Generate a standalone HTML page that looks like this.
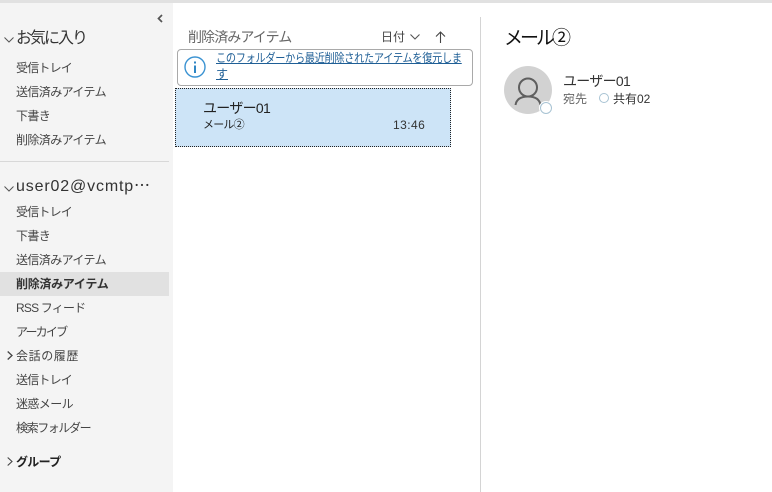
<!DOCTYPE html>
<html lang="ja"><head><meta charset="utf-8"><style>
html,body{margin:0;padding:0;width:772px;height:492px;overflow:hidden;background:#fff}
body{position:relative;font-family:"Liberation Sans","Noto Sans CJK JP",sans-serif;color:#333}
.t{position:absolute;white-space:nowrap;line-height:20px}
.n{left:16px;font-size:12px;color:#444;letter-spacing:-.6px}
.b{position:absolute}
svg{position:absolute;overflow:visible}
</style></head><body>
<div class="b" style="left:0;top:0;width:772px;height:3px;background:#e1e1e1"></div>
<div class="b" style="left:0;top:3px;width:173px;height:489px;background:#f4f4f4"></div>
<svg style="left:156px;top:14px" width="8" height="9"><path d="M6 1L2.500 4.500L6 8" fill="none" stroke="#555" stroke-width="1.700"/></svg>
<svg style="left:4px;top:37px" width="10" height="6"><path d="M.5 .5L5 5L9.500 .5" fill="none" stroke="#555" stroke-width="1"/></svg>
<div class="t" style="left:16px;top:29px;font-size:16px;color:#333;letter-spacing:-2px">お気に入り</div>
<div class="t n" style="top:58px;letter-spacing:-.8px">受信トレイ</div>
<div class="t n" style="top:82px">送信済みアイテム</div>
<div class="t n" style="top:106px">下書き</div>
<div class="t n" style="top:130px">削除済みアイテム</div>
<div class="b" style="left:0;top:161px;width:169px;height:1px;background:#d8d8d8"></div>
<svg style="left:4px;top:186px" width="10" height="6"><path d="M.5 .5L5 5L9.500 .5" fill="none" stroke="#555" stroke-width="1"/></svg>
<div class="t" style="left:16px;top:177px;font-size:16px;color:#333;letter-spacing:.85px">user02@vcmtp⋯</div>
<div class="t n" style="top:202px;letter-spacing:-.8px">受信トレイ</div>
<div class="t n" style="top:226px">下書き</div>
<div class="t n" style="top:250px">送信済みアイテム</div>
<div class="b" style="left:0;top:272px;width:169px;height:24px;background:#e1e1e1"></div>
<div class="t n" style="top:274px;font-weight:700;color:#333;letter-spacing:-.3px">削除済みアイテム</div>
<div class="t n" style="top:298px;letter-spacing:-.8px">RSS フィード</div>
<div class="t n" style="top:322px;letter-spacing:-1.800px">アーカイブ</div>
<svg style="left:7px;top:351px" width="6" height="9"><path d="M.7 .5L5 4.500L.7 8.500" fill="none" stroke="#444" stroke-width="1.300"/></svg>
<div class="t n" style="top:346px;letter-spacing:.6px">会話の履歴</div>
<div class="t n" style="top:370px;letter-spacing:-.8px">送信トレイ</div>
<div class="t n" style="top:394px;letter-spacing:-.6px">迷惑メール</div>
<div class="t n" style="top:418px;letter-spacing:-1.400px">検索フォルダー</div>
<svg style="left:7px;top:457px" width="6" height="9"><path d="M.7 .5L5 4.500L.7 8.500" fill="none" stroke="#444" stroke-width="1.100"/></svg>
<div class="t n" style="top:452px;font-weight:700;color:#222;letter-spacing:-.7px">グループ</div>

<div class="t" style="left:188px;top:27px;font-size:14px;color:#666;letter-spacing:-.9px">削除済みアイテム</div>
<div class="t" style="left:381px;top:27px;font-size:12px;color:#444">日付</div>
<svg style="left:410px;top:34px" width="10" height="6"><path d="M.5 .5L5 5L9.500 .5" fill="none" stroke="#555" stroke-width="1.100"/></svg>
<svg style="left:435px;top:31px" width="11" height="12"><path d="M5.500 12V1M1 5.500L5.500 1L10 5.500" fill="none" stroke="#444" stroke-width="1.100"/></svg>

<div class="b" style="left:177px;top:49px;width:294px;height:35px;border:1px solid #a9a9a9;border-radius:4px;background:#fff"></div>
<svg style="left:184px;top:56px" width="22" height="22"><circle cx="11" cy="11" r="10" fill="none" stroke="#3b93d2" stroke-width="1.400"/><rect x="10" y="9.500" width="2" height="7.500" fill="#2f86c4"/><rect x="10" y="5.500" width="2" height="2" fill="#2f86c4"/></svg>
<div class="t" style="left:216px;top:50px;font-size:12px;line-height:16px;color:#1f5f96;text-decoration:underline;letter-spacing:-.32px;transform:scaleX(.845);transform-origin:0 0">このフォルダーから最近削除されたアイテムを復元しま</div>
<div class="t" style="left:216px;top:66px;font-size:12px;line-height:16px;color:#1f5f96;text-decoration:underline">す</div>

<div class="b" style="left:175px;top:88px;width:274px;height:57px;background:#cde4f7;border:1px dotted #222"></div>
<div class="t" style="left:203px;top:98px;font-size:14px;color:#222;letter-spacing:-.7px">ユーザー01</div>
<div class="t" style="left:203px;top:115px;font-size:11px;color:#222;letter-spacing:-.8px">メール②</div>
<div class="t" style="left:393px;top:115px;font-size:12px;color:#333;letter-spacing:.45px">13:46</div>

<div class="b" style="left:480px;top:17px;width:1px;height:475px;background:#d4d4d4"></div>
<div class="t" style="left:504px;top:29px;font-size:19px;color:#111;letter-spacing:-3px">メール②</div>
<div class="b" style="left:504px;top:66px;width:48px;height:48px;border-radius:50%;background:#d2d2d2"></div>
<svg style="left:504px;top:66px" width="48" height="48"><circle cx="24" cy="21.500" r="9" fill="none" stroke="#5f5f5f" stroke-width="2"/><path d="M11.500 39C12.500 33 17 30.500 24 30.500C31 30.500 35.500 33 36.500 39" fill="none" stroke="#5f5f5f" stroke-width="2"/></svg>
<div class="b" style="left:540px;top:102px;width:10px;height:10px;border-radius:50%;background:#fff;border:1px solid #a8c3d3;box-shadow:0 0 0 1px #fff"></div>
<div class="t" style="left:563px;top:71px;font-size:14px;color:#333;letter-spacing:-.7px">ユーザー01</div>
<div class="t" style="left:563px;top:89px;font-size:12px;color:#666">宛先</div>
<div class="b" style="left:599px;top:93px;width:8px;height:8px;border-radius:50%;background:#fff;border:1px solid #a8c3d3"></div>
<div class="t" style="left:613px;top:89px;font-size:12px;color:#333">共有02</div>
</body></html>
